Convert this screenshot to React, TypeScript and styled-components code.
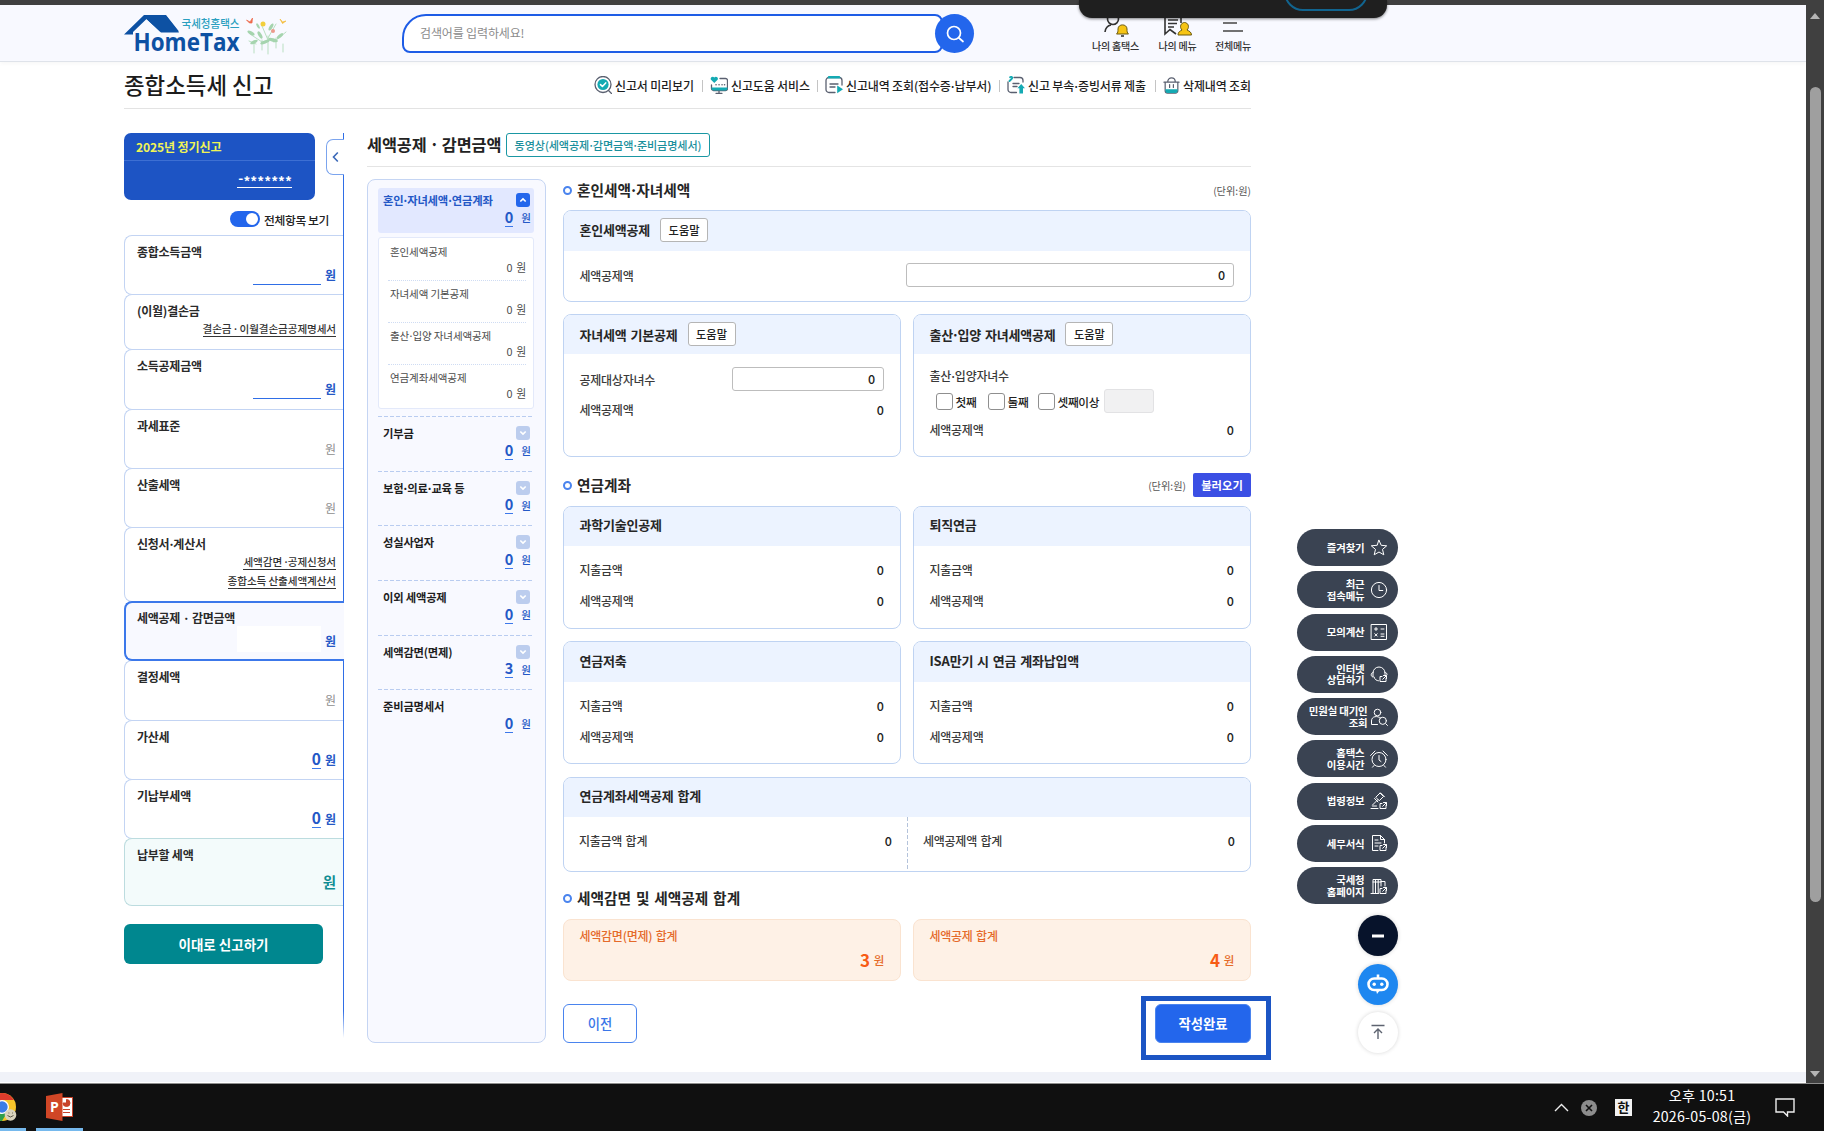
import React from 'react';
import styled, { createGlobalStyle, css } from 'styled-components';

const Global = createGlobalStyle`
  *, *::before, *::after { box-sizing: border-box; }
  body { margin: 0; background: #fff; overflow: hidden; }
  body, button, input { font-family: "Noto Sans CJK KR", "Noto Sans", sans-serif; }
  button { padding: 0; margin: 0; }
`;

/* ---------- shell ---------- */
const Screen = styled.div`
  width: 1824px; height: 1131px; display: flex; flex-direction: column;
  color: #222; position: relative; overflow: hidden; white-space: nowrap;
`;
const Browser = styled.div`display: flex; height: 1084px; border-bottom: 1px solid #8f8f8f;`;
const Page = styled.div`width: 1806px; display: flex; flex-direction: column; border-top: 5px solid #404040;`;
const PageEnd = styled.div`height: 10px; background: #f0f2f8; margin-top: auto; margin-bottom: 1px;`;
const Scroll = styled.div`
  width: 18px; background: #404040; display: flex; flex-direction: column; align-items: center;
  padding: 13px 0 6px; justify-content: space-between;
`;
const Thumb = styled.div`width: 11px; height: 815px; border-radius: 6px; background: #9f9f9f; margin: 68px 0 auto;`;
const Arrow = styled.i<{ $down?: boolean }>`
  border: 5px solid transparent; border-top-width: 0; border-bottom: 6px solid #b5b5b5;
  ${p => p.$down && 'transform: rotate(180deg);'}
`;
const Toast = styled.div`
  position: absolute; left: 1079px; top: 0; width: 308px; height: 18px; background: #1f1f1f;
  border-radius: 0 0 13px 13px; box-shadow: 0 1px 3px rgba(0,0,0,.5); overflow: hidden;
  &::after { content: ''; position: absolute; left: 205px; bottom: 7px; width: 84px; height: 38px;
    border: 2px solid #11648f; border-radius: 20px; }
`;

/* Interpunct with tightened side bearings */
const Dot = styled.span`margin: 0 -0.12em;`;
const tight = (s: string) => s.split('·').map((part, i) => (
  <React.Fragment key={i}>{i > 0 && <Dot>·</Dot>}{part}</React.Fragment>
));

/* ---------- header ---------- */
const Header = styled.header`
  height: 57px; background: #f8f9ff; border-bottom: 1px solid #dfe3ea; padding-left: 124px;
  display: flex; box-shadow: 0 2px 4px rgba(0,0,0,.03);
`;
const Logo = styled.div`width: 278px; padding-top: 9px; svg { display: block; }`;
const SearchBox = styled.div`
  width: 541px; height: 39px; margin-top: 9px; border: 2px solid #1d5ce6; background: #fff;
  border-radius: 24px 8px 8px 8px; padding-left: 16px; font-size: 12px; line-height: 34px; color: #8b8b8b; letter-spacing: -0.15px;
`;
const SearchButton = styled.button`
  width: 39px; height: 39px; border-radius: 50%; border: 0; background: #2366ec; margin: 9px 0 0 -8px;
  display: grid; place-items: center;
`;
const UserMenu = styled.nav`display: flex; margin: 5px 0 0 116px; gap: 16px;`;
const UserItem = styled.div<{ $w: number }>`
  width: ${p => p.$w}px; display: flex; flex-direction: column; align-items: center;
  font-size: 10px; line-height: 14px; letter-spacing: -0.2px; color: #333; font-weight: 500;
  svg { display: block; margin-bottom: 2px; flex: none; }
`;

/* ---------- title row ---------- */
const Container = styled.div`width: 1127px; margin-left: 124px;`;
const TitleRow = styled.div`
  height: 47px; border-bottom: 1px solid #e3e3e3; display: flex; align-items: center;
  justify-content: space-between;
`;
const PageTitle = styled.h1`margin: 0; padding-bottom: 2px; font-size: 22.4px; font-weight: 500; color: #1c1c1c; line-height: 44px;`;
const Links = styled.div`display: flex; align-items: center; height: 47px;`;
const LinkItem = styled.a<{ $w: number }>`
  width: ${p => p.$w}px; display: flex; align-items: center; font-size: 12px; font-weight: 500;
  color: #1e1e1e; letter-spacing: -0.15px;
  svg { flex: none; margin-right: 3px; }
`;
const Sep = styled.i`width: 1px; height: 12px; background: #c4c4c4; margin: 2px 7px 0 8px;`;

const Columns = styled.div`display: flex; align-items: flex-start; padding-top: 24px;`;

/* ---------- left side ---------- */
const Side = styled.aside`
  width: 220px; height: 905px; position: relative;
  &::after { content: ''; position: absolute; right: 0; top: 0; width: 1px; height: 100%;
    background: linear-gradient(#2f6ee6 97%, rgba(47,110,230,0)); }
`;
const CollapseTab = styled.div`
  position: absolute; z-index: 2; left: 202px; top: 6px; width: 18px; height: 36px; background: #fff;
  border: 1px solid #7ba4ee; border-right: 0; border-radius: 7px 0 0 7px; display: grid; place-items: center;
`;
const YearBox = styled.div`
  width: 191px; height: 67px; border-radius: 7px; background: #1d54c4; color: #f0f455; font-weight: 700;
  font-size: 12.1px; line-height: 27px;
`;
const YearTop = styled.div`height: 28px; padding-left: 12px; border-bottom: 1px solid #3d6fd3; letter-spacing: -0.15px;`;
const Masked = styled.span`
  display: flex; justify-content: flex-end; width: 55px; height: 19px; margin: 8px 0 0 113px; border-bottom: 1.5px solid #fff; color: #fff;
  font-size: 13.5px; line-height: 24px; letter-spacing: 0.1px;
  i { font-style: normal; line-height: 17px; }
`;
const ToggleRow = styled.div`
  height: 34px; margin-top: 1px; padding: 2px 15px 0 0; display: flex; justify-content: flex-end; align-items: center; gap: 4px;
  font-size: 11.8px; font-weight: 500; letter-spacing: -0.4px;
`;
const Toggle = styled.i`
  width: 30px; height: 16px; border-radius: 8px; background: #2366ec; padding: 2px; display: flex; justify-content: flex-end;
  &::after { content: ''; width: 12px; height: 12px; border-radius: 50%; background: #fff; }
`;
const tones = {
  blue: '#2458c6', gray: '#8e8e8e', teal: '#108d93',
};
const StepCard = styled.div<{ $h: number; $kind?: 'active' | 'total' }>`
  height: ${p => p.$h + 1}px; margin-bottom: -1px; padding: 7px 8px 0 12px; position: relative;
  border: 1px solid #c3d4f3; border-right: 0; border-radius: 8px 0 0 8px; background: #fff;
  ${p => p.$kind === 'active' && css`background: #f8f9ff; border: 2px solid #3c78ea; border-right: 0; z-index: 1; padding: 6px 8px 0 11px;`}
  ${p => p.$kind === 'total' && css`background: #f3fbfb; border-color: #bcdcdf;`}
`;
const StepName = styled.div`font-size: 12px; line-height: 18px; font-weight: 700; letter-spacing: -0.25px; color: #2a2a2a;`;
const StepValue = styled.div<{ $tone: keyof typeof tones; $big?: boolean }>`
  display: flex; justify-content: flex-end; align-items: center; gap: 4px; height: 26px; margin-top: 0;
  font-size: ${p => (p.$big ? 14.5 : 12)}px; font-weight: ${p => (p.$tone === 'gray' ? 400 : 700)};
  color: ${p => tones[p.$tone]};
  ${p => p.$big && 'margin-top: 4px;'}
`;
const Blank = styled.span`width: 68px; height: 1px; background: #2f6ee6; margin-top: 20px;`;
const WhiteBlank = styled.span`width: 84px; height: 26px; background: #fff; margin-top: -3px;`;
const Figure = styled.b`font-size: 15.5px; line-height: 18px; height: 20px; font-weight: 700; border-bottom: 1px solid #3c78ea;`;
const DocLink = styled.div`
  width: max-content; margin: 0 0 3px auto; font-size: 10.6px; line-height: 15px; letter-spacing: -0.1px; color: #333; font-weight: 500;
  border-bottom: 1px solid #333; position: relative; top: 1px;
`;
const FileButton = styled.button`
  width: 199px; height: 40px; margin-top: 19px; background: #00878f; color: #fff; border: 0; border-radius: 6px;
  font-size: 13.5px; font-weight: 700;
`;

/* ---------- work area ---------- */
const Work = styled.main`width: 884px; margin-left: 23px;`;
const WorkHead = styled.div`
  height: 34px; border-bottom: 1px solid #e4e4e4; display: flex; align-items: flex-start; gap: 6px;
`;
const WorkTitle = styled.h2`margin: 0; width: 133px; font-size: 16.3px; line-height: 23px; font-weight: 700; color: #222; letter-spacing: -0.05px; word-spacing: 1px;`;
const VideoButton = styled.button`
  width: 204px; height: 24px; background: #fff; border: 1.5px solid #1a97a3; border-radius: 3px;
  color: #1a8f9c; font-size: 11.1px; letter-spacing: -0.1px; line-height: 20px; font-weight: 500;
`;
const WorkBody = styled.div`display: flex; gap: 17px; padding-top: 12px;`;

const Tree = styled.div`
  width: 179px; height: 864px; background: #f8f9ff; border: 1px solid #c5d5f3; border-radius: 8px; padding: 8px 11px 0 10px;
`;
const TreeNode = styled.div<{ $open?: boolean }>`
  height: ${p => (p.$open ? 45 : 54.7)}px; padding: ${p => (p.$open ? 3 : 8)}px 3px 0 5px; color: #1e1e1e;
  ${p => (p.$open ? 'background: #e2e8ff; border-radius: 3px; color: #2458c6;' : 'background: repeating-linear-gradient(90deg, #b9ccf0 0 4px, transparent 4px 6px) 0 0 / 100% 1px no-repeat;')}
`;
const NodeTop = styled.div`
  display: flex; justify-content: space-between; align-items: center; height: 18px; padding-right: 1px;
  font-size: 11.3px; font-weight: 700; letter-spacing: -0.2px;
`;
const Chevron = styled.span<{ $on?: boolean }>`
  width: 14px; height: 14px; border-radius: 3px; background: ${p => (p.$on ? '#2366ec' : '#bccdee')}; display: grid; place-items: center;
`;
const NodeValue = styled.div`
  display: flex; justify-content: flex-end; gap: 8px; align-items: center; color: #2458c6; font-size: 10.5px; height: 19px; margin-top: -1px; font-weight: 500;
`;
const NodeNum = styled.b`font-size: 14.5px; line-height: 16px; height: 18px; border-bottom: 1px solid #3c78ea; font-weight: 700;`;
const SubList = styled.div`
  height: 172px; margin: 4px 0 7px; background: #fff; border: 1px solid #e3e9fa; border-radius: 3px; padding: 0 7px 0 9px;
`;
const SubItem = styled.div`
  height: 42px; padding: 6px 0 0 2px; font-size: 10.5px; line-height: 16px; color: #4c4c4c; letter-spacing: -0.1px;
  & + & { border-top: 1px dotted #cfdcf3; padding-top: 5px; }
`;
const SubValue = styled.div`text-align: right; line-height: 14px; font-size: 10.8px; word-spacing: 1.5px;`;

const Form = styled.div`width: 688px;`;
const SectionHead = styled.div<{ $h: number; $pt: number }>`
  height: ${p => p.$h}px; padding-top: ${p => p.$pt}px; display: flex; align-items: flex-start;
`;
const SectionTitle = styled.h3`
  margin: 0 auto 0 0; font-size: 14.7px; line-height: 22px; font-weight: 700; color: #262626; display: flex; align-items: center; word-spacing: 1.5px;
  &::before { content: ''; width: 9px; height: 9px; border-radius: 50%; border: 2.5px solid #4a84ee; margin: 1px 5px 0 0; }
`;
const Unit = styled.span`font-size: 10.2px; line-height: 23px; color: #555;`;
const LoadButton = styled.button`
  width: 58px; height: 24px; border: 0; border-radius: 2px; background: #3b4fe4; color: #fff; font-size: 11.3px; font-weight: 700; margin: -1px 0 0 7px;
`;
const CardRow = styled.div<{ $mb: number }>`display: flex; gap: 12px; margin-bottom: ${p => p.$mb}px;`;
const Card = styled.section<{ $h: number }>`
  flex: 1; height: ${p => p.$h}px; border: 1px solid #bfd3f2; border-radius: 8px; overflow: hidden; background: #fff;
`;
const CardHead = styled.div<{ $h: number; $pb?: number }>`
  height: ${p => p.$h}px; background: #ecf3ff; padding: 0 15.5px ${p => p.$pb ?? 4}px; display: flex; align-items: center; gap: 10px;
  font-size: 13px; font-weight: 700; letter-spacing: -0.2px; word-spacing: 1.2px; color: #262626;
`;
const HelpButton = styled.button<{ $mt?: number }>`
  width: 48px; height: 24px; background: #fff; border: 1px solid #b5b5b5; border-radius: 3px; font-size: 11.2px; color: #222;
  margin-top: ${p => p.$mt ?? -2}px; font-weight: 500;
`;
const Rows = styled.div<{ $pt: number }>`padding: ${p => p.$pt}px 16px 0 15.5px; display: flex; flex-direction: column;`;
const Row = styled.div<{ $h: number }>`
  height: ${p => p.$h}px; display: flex; align-items: center; justify-content: space-between; font-size: 12px; color: #3a3a3a; letter-spacing: -0.25px; font-weight: 500;
`;
const Num = styled.span`font-size: 12.5px; color: #222; letter-spacing: 0;`;
const NumField = styled.div<{ $w: number }>`
  width: ${p => p.$w}px; height: 24px; border: 1px solid #bdbdbd; border-radius: 3px; text-align: right; padding-right: 8px;
  font-size: 12.5px; line-height: 21px; color: #222;
`;
const Checks = styled.div`display: flex; align-items: center; height: 24px; margin-top: 3px; padding-left: 6px; font-size: 11.7px; letter-spacing: -0.35px; color: #222; font-weight: 500;`;
const Check = styled.label<{ $w: number }>`
  width: ${p => p.$w}px; display: flex; align-items: center; gap: 3px;
  &::before { content: ''; width: 17px; height: 17px; border: 1.5px solid #8f8f8f; border-radius: 3px; background: #fff; margin-top: 1px; flex: none; }
`;
const Disabled = styled.span`width: 50px; height: 24px; border: 1px solid #e2e2e4; border-radius: 3px; background: #f1f1f2;`;
const SumSplit = styled.div`display: flex; height: 54px;`;
const SumHalf = styled.div<{ $w: number }>`
  width: ${p => p.$w}px; padding: 0 15px; display: flex; justify-content: space-between; align-items: center; height: 46px;
  font-size: 12px; color: #3a3a3a; letter-spacing: -0.25px; word-spacing: 1px; font-weight: 500;
`;
const Dash = styled.i`width: 1px; height: 54px; background: repeating-linear-gradient(#b4c3db 0 4px, transparent 4px 6px);`;
const Total = styled.section`
  flex: 1; height: 62px; background: #fef1e6; border: 1px solid #fae3d0; border-radius: 8px; padding: 7px 16px 0 15.5px; color: #e56a2a;
  font-size: 12px; line-height: 18px; letter-spacing: -0.25px; word-spacing: 1px; font-weight: 500;
`;
const TotalValue = styled.div`
  display: flex; justify-content: flex-end; align-items: center; gap: 4px; height: 30px; font-size: 11.5px;
  b { font-size: 17px; color: #f75c14; }
`;
const Actions = styled.div`display: flex; justify-content: space-between; padding-top: 23px;`;
const Prev = styled.button`
  width: 74px; height: 39px; background: #fff; border: 1.5px solid #4a84ee; border-radius: 6px; color: #3a76e8; font-size: 13.3px; font-weight: 500;
`;
const Done = styled.button`
  position: relative; width: 96px; height: 39px; background: #2366ec; border: 1px solid #4a84ee; border-radius: 6px; color: #fff; font-size: 13.3px; font-weight: 700;
  &::after { content: ''; position: absolute; left: -15px; top: -9px; width: 130px; height: 64px; border: 5px solid #1c55c4; }
`;

/* ---------- floating menu ---------- */
const Quick = styled.nav`
  position: absolute; left: 1296.5px; top: 529px; width: 101px; display: flex; flex-direction: column; align-items: flex-end; gap: 5.27px;
`;
const QuickItem = styled.a<{ $wide?: boolean }>`
  width: 101px; height: 37px; border-radius: 19px; background: #3a4352; color: #fff; display: flex; align-items: center; justify-content: flex-end;
  gap: ${p => (p.$wide ? 2 : 5)}px; padding-right: 10px; font-size: 10.4px; line-height: 11.5px; font-weight: 700; text-align: right; letter-spacing: -0.15px;
  svg { flex: none; }
`;
const Round = styled.a<{ $bg: string; $mt: number }>`
  width: 40px; height: 41px; border-radius: 50%; background: ${p => p.$bg}; display: grid; place-items: center;
  margin-top: ${p => p.$mt}px; box-shadow: 0 0 4px rgba(0,0,0,.16);
`;

/* ---------- taskbar ---------- */
const Taskbar = styled.footer`
  height: 47px; background: #101010; color: #fff; display: flex;
`;
const AppSlot = styled.div<{ $w: number; $ml: number }>`
  width: ${p => p.$w}px; margin-left: ${p => p.$ml}px; height: 47px; border-bottom: 3px solid #76b9ed; padding-top: 9px;
  display: flex; justify-content: center; overflow: hidden;
  svg { flex: none; }
`;
const ChromeIcon = styled.svg`margin-left: -22px;`;
const Tray = styled.div`margin-left: auto; display: flex; align-items: center; padding-right: 29px;`;
const TrayIcon = styled.span<{ $mr: number }>`display: flex; margin-right: ${p => p.$mr}px;`;
const Ime = styled.b`width: 17px; height: 17px; background: #f2f2f2; color: #111; font-size: 13px; line-height: 16px; text-align: center; margin-right: 10px;`;
const Clock = styled.div`width: 120px; text-align: center; font-size: 14.2px; line-height: 21px; letter-spacing: 0.25px; margin-right: 13px; padding-bottom: 3px;`;

/* ---------- icons ---------- */
const S = ({ w = 18, children, sw = 1.3, c = '#fff' }: { w?: number; children: React.ReactNode; sw?: number; c?: string }) => (
  <svg width={w} height={w} viewBox="0 0 18 18" fill="none" stroke={c} strokeWidth={sw} strokeLinecap="round" strokeLinejoin="round">{children}</svg>
);
const ext = <path d="M12 11.5h-2v5h6v-3M13.5 10.5h3v3M16.3 10.7l-3.6 3.6" />;
const T = '#14aab3';
const G = '#5a6070';

const topLinks: [React.ReactNode, string, number][] = [
  [<S c={G}><circle cx="9" cy="8.5" r="8" /><path d="M14.5 14.5l3 3" /><circle cx="9" cy="8.5" r="5.6" fill={T} stroke="none" /><path d="M6.5 8.6l1.9 1.8 3.3-3.5" stroke="#fff" strokeWidth="1.5" /></S>, '신고서 미리보기', 100],
  [<S c={G}><path d="M10 2.5h5.5a2 2 0 0 1 2 2v8a2 2 0 0 1-2 2h-12a2 2 0 0 1-2-2V9M6 17.3h6M9 14.500v2.800" /><path d="M1.500 11.500h16v1a2 2 0 0 1-2 2h-12a2 2 0 0 1-2-2z" fill={T} stroke="none" /><path d="M4.300 7L1 3.700C-.3 2 2.600-.6 4.300 1.600 6-.6 8.900 2 7.600 3.700z" fill={T} stroke="none" /><path d="M6 8.800h.1M9 8.800h.1M12 8.800h.1M14.500 8.800h.1" strokeWidth="1.500" /></S>, '신고도움 서비스', 99],
  [<S c={G}><path d="M10 16.500H4a3 3 0 0 1-3-3V4.500a3 3 0 0 1 3-3h10a3 3 0 0 1 3 3V9M5 8h8M5 11h5" /><path d="M4 1.300h10" stroke={T} strokeWidth="2.400" /><path d="M12.200 9.500l5.800 3.800-5.800 4z" fill={T} stroke="none" /></S>, '신고내역 조회(접수증·납부서)', 166],
  [<S c={G}><path d="M9.500 16.500H4a3 3 0 0 1-3-3V6M7 1.500h6a3 3 0 0 1 3 3V6M6 7.500h6M6 10.500h4" /><path d="M3 1.200c2-1 3 .5 1.500 1.800L2.500 5" stroke={T} strokeWidth="1.800" /><path d="M14.200 8l3.800 4.300h-2v5.200h-3.600v-5.200h-2z" fill={T} stroke="none" /></S>, '신고 부속·증빙서류 제출', 140],
  [<S c={G} w={17}><path d="M1 5.500h16M2.300 5.500v9a2.500 2.500 0 0 0 2.500 2.500h8.400a2.500 2.500 0 0 0 2.500-2.500v-9M5 5.300C5 -.5 13-.5 13 5.300M7 8v3M11 8v3" /><path d="M2.500 13h13v1.500a2.500 2.500 0 0 1-2.500 2.500H5a2.500 2.500 0 0 1-2.500-2.500z" fill={T} stroke="none" /></S>, '삭제내역 조회', 88],
];

const quick: [string[], React.ReactNode][] = [
  [['즐겨찾기'], <path d="M9 1.300l2.200 5 5.500.5-4.200 3.600 1.300 5.400L9 13l-4.800 2.800 1.300-5.400L1.300 6.800l5.500-.5z" />],
  [['최근', '접속메뉴'], <><circle cx="9" cy="9" r="7.600" /><path d="M9 4.500V9.500h3.800" /></>],
  [['모의계산'], <><rect x="1.500" y="1.500" width="15" height="15" /><path d="M4.500 6h3M6 4.500v3M11 6h3M4.800 10.700l2.400 2.400M7.200 10.700l-2.400 2.400M11 11h3M11 13.300h3" /></>],
  [['인터넷', '상담하기'], <><path d="M3 11.500V8a6 6 0 0 1 12 0v1.500M3 7.500c-2.500 0-2.500 4.500 0 4.500M15 7.500c1.500 0 2 1 2 2M4 12c1 3 2.500 3.500 4.500 3.800" />{ext}</>],
  [['민원실 대기인', '조회'], <><circle cx="7.500" cy="4.500" r="3.300" /><path d="M7.500 16.500h-6v-3.500c0-5 6-5.500 9-3M16 16l1.500 1.500" /><circle cx="12.800" cy="12.800" r="3.600" /></>],
  [['홈택스', '이용시간'], <><circle cx="9" cy="9.500" r="7" /><path d="M9 5.500v4.500l2 1.500M.6 5.500L5 1M17.400 5.500L13 1M4 15.500l-1.500 1.700M14 15.500l1.500 1.700" /></>],
  [['법령정보'], <><path d="M6 5l4-4 3.500 3.500-4 4zM4.500 6.500l3.500 3.500M10.500.8l4 4M8 7.500l-5.500 5.500M1 16.500h7M2.500 14h4" />{ext}</>],
  [['세무서식'], <><path d="M8 16.500H2.500v-15h8l4 4V9M10.500 1.500v4h4M5 6h3M5 9h6M5 12h3" />{ext}</>],
  [['국세청', '홈페이지'], <><path d="M1 16.500h7.500M3 16V2.500h8V9M11 4.500h4V9M5.500 2.500V16M8.200 2.500V16M3 5h8" />{ext}</>],
];

const Won = ({ n }: { n: string }) => <NodeValue><NodeNum>{n}</NodeNum>원</NodeValue>;
const Chev = ({ up }: { up?: boolean }) => (
  <Chevron $on={up}>
    <svg width="8" height="6" viewBox="0 0 8 6" fill="none" stroke="#fff" strokeWidth="1.7"><path d={up ? 'M1.300 4.500L4 2l2.700 2.500' : 'M1.300 1.500L4 4l2.700-2.500'} /></svg>
  </Chevron>
);
const MoneyCard = ({ title, h, head }: { title: string; h: number; head: number }) => (
  <Card $h={h}>
    <CardHead $h={head}>{title}</CardHead>
    <Rows $pt={8}>
      <Row $h={31}>지출금액<Num>0</Num></Row>
      <Row $h={31}>세액공제액<Num>0</Num></Row>
    </Rows>
  </Card>
);

export default function App() {
  return (
    <Screen>
      <Global />
      <Browser>
        <Page>
          <Header>
            <Logo>
              <svg width="168" height="44" viewBox="0 0 168 44">
                <path d="M0 20.500L20 1h22l13 16.500H36L22.500 5 9 18v2.500z" fill="#0d51a3" />
                <path d="M22 4.500L37 18.500h18L41.500 1H21z" fill="#0d51a3" />
                <text x="9.500" y="36.500" fontFamily="'Open Sans', 'Noto Sans', sans-serif" fontSize="24.500" fontWeight="700" fill="#0d51a3" textLength="106" lengthAdjust="spacingAndGlyphs">HomeTax</text>
                <text x="57.500" y="14" fontFamily="'Noto Sans CJK KR', sans-serif" fontSize="11" fontWeight="500" fill="#2a9fc0" textLength="58" lengthAdjust="spacingAndGlyphs">국세청홈택스</text>
                <g fill="none" stroke="#b9dfc1" strokeWidth="1" strokeLinecap="round">
                  <path d="M144 40V22M138 36V26M130 39V28M152 34V24M159 38V30M144 26l-6-14M144 24l8-14M138 28l-12-8M150 28l12-10M132 30l-7-3" />
                </g>
                <g fill="#a5d4ae">
                  <ellipse cx="127" cy="19" rx="4" ry="1.600" transform="rotate(30 127 19)" /><ellipse cx="130" cy="28" rx="4" ry="1.600" transform="rotate(-25 130 28)" />
                  <ellipse cx="136" cy="21" rx="4" ry="1.700" transform="rotate(60 136 21)" /><ellipse cx="147" cy="13" rx="4" ry="1.600" transform="rotate(-60 147 13)" />
                  <ellipse cx="149" cy="26" rx="5" ry="1.800" transform="rotate(15 149 26)" /><ellipse cx="156" cy="22" rx="4" ry="1.600" transform="rotate(-40 156 22)" />
                  <ellipse cx="141" cy="28" rx="5" ry="1.600" transform="rotate(-20 141 28)" /><ellipse cx="134" cy="12" rx="3" ry="1.200" transform="rotate(60 134 12)" />
                </g>
                <circle cx="139" cy="10" r="2.500" fill="#f2cf3c" /><circle cx="149" cy="17" r="2" fill="#ec9a8c" />
                <path d="M122.500 6l3.500 2 2.500-4-.5 5-2.500 0z" fill="#ee6a4c" stroke="#ee6a4c" strokeWidth=".7" /><path d="M156 5l2.500 3 3.500-1-3.500 2.500z" fill="#f4bd3c" stroke="#f4bd3c" strokeWidth=".7" />
              </svg>
            </Logo>
            <SearchBox>검색어를 입력하세요!</SearchBox>
            <SearchButton aria-label="검색">
              <svg width="20" height="20" viewBox="0 0 20 20" fill="none" stroke="#fff" strokeWidth="1.700" strokeLinecap="round"><circle cx="9" cy="9" r="6.500" /><path d="M14 14l4 3.500" /></svg>
            </SearchButton>
            <UserMenu>
              <UserItem $w={51}>
                <svg width="28" height="27" viewBox="0 0 28 27" fill="none" stroke="#333" strokeWidth="1.600"><circle cx="11" cy="9" r="5.500" /><path d="M3 22c.5-4 3-6.500 6-7" /><path d="M14.500 24c1.500-1 1.500-3 1.500-5 0-5.500 9-5.500 9 0 0 2 0 4 1.500 5z" fill="#f6c414" stroke="#6b5a10" strokeWidth="1" /><path d="M19 26h3" /></svg>
                나의 홈택스
              </UserItem>
              <UserItem $w={41}>
                <svg width="28" height="27" viewBox="0 0 28 27" fill="none" stroke="#333" strokeWidth="1.600"><path d="M1 5v19l5-4.500 6 4.500M17 5v8M4 10h10M4 13.500h9M4 17h6" /><path d="M14 25c0-3 2-4 4-5-3-3-1-7.500 2.500-7.500S26 17 23 20c2 1 4.500 2 4.500 5z" fill="#f6c414" stroke="#6b5a10" strokeWidth="1" /></svg>
                나의 메뉴
              </UserItem>
              <UserItem $w={38}>
                <svg width="22" height="27" viewBox="0 0 22 27" stroke="#444" strokeWidth="1.500"><path d="M1 13h14M1 21h20" /></svg>
                전체메뉴
              </UserItem>
            </UserMenu>
          </Header>

          <Container>
            <TitleRow>
              <PageTitle>종합소득세 신고</PageTitle>
              <Links>
                {topLinks.map(([icon, label, w], i) => (
                  <React.Fragment key={label}>
                    {i > 0 && <Sep />}
                    <LinkItem $w={w}>{icon}<span>{tight(label)}</span></LinkItem>
                  </React.Fragment>
                ))}
              </Links>
            </TitleRow>

            <Columns>
              <Side>
                <CollapseTab>
                  <svg width="7" height="12" viewBox="0 0 7 12" fill="none" stroke="#3a68b8" strokeWidth="1.600"><path d="M5.800 1.500L1.500 6l4.300 4.500" /></svg>
                </CollapseTab>
                <YearBox>
                  <YearTop>2025년 정기신고</YearTop>
                  <Masked><i>-</i>*******</Masked>
                </YearBox>
                <ToggleRow><Toggle />전체항목 보기</ToggleRow>
                <StepCard $h={59}><StepName>종합소득금액</StepName><StepValue $tone="blue"><Blank />원</StepValue></StepCard>
                <StepCard $h={55}><StepName>(이월)결손금</StepName><DocLink>{tight('결손금 · 이월결손금공제명세서')}</DocLink></StepCard>
                <StepCard $h={60}><StepName>소득공제금액</StepName><StepValue $tone="blue"><Blank />원</StepValue></StepCard>
                <StepCard $h={59}><StepName>과세표준</StepName><StepValue $tone="gray">원</StepValue></StepCard>
                <StepCard $h={59}><StepName>산출세액</StepName><StepValue $tone="gray">원</StepValue></StepCard>
                <StepCard $h={74}><StepName>{tight('신청서·계산서')}</StepName><DocLink>{tight('세액감면 ·공제신청서')}</DocLink><DocLink>종합소득 산출세액계산서</DocLink></StepCard>
                <StepCard $h={59} $kind="active"><StepName>세액공제 · 감면금액</StepName><StepValue $tone="blue"><WhiteBlank />원</StepValue></StepCard>
                <StepCard $h={60}><StepName>결정세액</StepName><StepValue $tone="gray">원</StepValue></StepCard>
                <StepCard $h={59}><StepName>가산세</StepName><StepValue $tone="blue"><Figure>0</Figure>원</StepValue></StepCard>
                <StepCard $h={59}><StepName>기납부세액</StepName><StepValue $tone="blue"><Figure>0</Figure>원</StepValue></StepCard>
                <StepCard $h={67} $kind="total"><StepName>납부할 세액</StepName><StepValue $tone="teal" $big>원</StepValue></StepCard>
                <FileButton>이대로 신고하기</FileButton>
              </Side>

              <Work>
                <WorkHead>
                  <WorkTitle>{tight('세액공제 · 감면금액')}</WorkTitle>
                  <VideoButton>{tight('동영상(세액공제·감면금액·준비금명세서)')}</VideoButton>
                </WorkHead>
                <WorkBody>
                  <Tree>
                    <TreeNode $open><NodeTop><span>{tight('혼인·자녀세액·연금계좌')}</span><Chev up /></NodeTop><Won n="0" /></TreeNode>
                    <SubList>
                      {['혼인세액공제', '자녀세액 기본공제', '출산·입양 자녀세액공제', '연금계좌세액공제'].map(t => (
                        <SubItem key={t}>{tight(t)}<SubValue>0 원</SubValue></SubItem>
                      ))}
                    </SubList>
                    {[['기부금', '0'], ['보험·의료·교육 등', '0'], ['성실사업자', '0'], ['이외 세액공제', '0'], ['세액감면(면제)', '3'], ['준비금명세서', '0']].map(([t, n], i) => (
                      <TreeNode key={t}><NodeTop><span>{tight(t)}</span>{i < 5 && <Chev />}</NodeTop><Won n={n} /></TreeNode>
                    ))}
                  </Tree>

                  <Form>
                    <SectionHead $h={31} $pt={0}><SectionTitle><span>{tight('혼인세액·자녀세액')}</span></SectionTitle><Unit>(단위:원)</Unit></SectionHead>
                    <CardRow $mb={12}>
                      <Card $h={92}>
                        <CardHead $h={40}>혼인세액공제<HelpButton $mt={2}>도움말</HelpButton></CardHead>
                        <Rows $pt={11}><Row $h={26}>세액공제액<NumField $w={328}>0</NumField></Row></Rows>
                      </Card>
                    </CardRow>
                    <CardRow $mb={15}>
                      <Card $h={143}>
                        <CardHead $h={39} $pb={0}>자녀세액 기본공제<HelpButton>도움말</HelpButton></CardHead>
                        <Rows $pt={10}>
                          <Row $h={30}>공제대상자녀수<NumField $w={152}>0</NumField></Row>
                          <Row $h={31}>세액공제액<Num>0</Num></Row>
                        </Rows>
                      </Card>
                      <Card $h={143}>
                        <CardHead $h={39} $pb={0}><span>{tight('출산·입양 자녀세액공제')}</span><HelpButton>도움말</HelpButton></CardHead>
                        <Rows $pt={10}>
                          <Row $h={22}><span>{tight('출산·입양자녀수')}</span></Row>
                          <Checks>
                            <Check $w={52}>첫째</Check><Check $w={50}>둘째</Check><Check $w={66}>셋째이상</Check><Disabled />
                          </Checks>
                          <Row $h={32}>세액공제액<Num>0</Num></Row>
                        </Rows>
                      </Card>
                    </CardRow>
                    <SectionHead $h={34} $pt={2}><SectionTitle>연금계좌</SectionTitle><Unit>(단위:원)</Unit><LoadButton>불러오기</LoadButton></SectionHead>
                    <CardRow $mb={12}>
                      <MoneyCard title="과학기술인공제" h={123} head={39} />
                      <MoneyCard title="퇴직연금" h={123} head={39} />
                    </CardRow>
                    <CardRow $mb={13}>
                      <MoneyCard title="연금저축" h={123} head={40} />
                      <MoneyCard title="ISA만기 시 연금 계좌납입액" h={123} head={40} />
                    </CardRow>
                    <CardRow $mb={15}>
                      <Card $h={95}>
                        <CardHead $h={39}>연금계좌세액공제 합계</CardHead>
                        <SumSplit>
                          <SumHalf $w={343}>지출금액 합계<Num>0</Num></SumHalf><Dash />
                          <SumHalf $w={342}>세액공제액 합계<Num>0</Num></SumHalf>
                        </SumSplit>
                      </Card>
                    </CardRow>
                    <SectionHead $h={32} $pt={0}><SectionTitle>세액감면 및 세액공제 합계</SectionTitle></SectionHead>
                    <CardRow $mb={0}>
                      <Total>세액감면(면제) 합계<TotalValue><b>3</b>원</TotalValue></Total>
                      <Total>세액공제 합계<TotalValue><b>4</b>원</TotalValue></Total>
                    </CardRow>
                    <Actions><Prev>이전</Prev><Done>작성완료</Done></Actions>
                  </Form>
                </WorkBody>
              </Work>
            </Columns>
          </Container>
          <PageEnd />
        </Page>
        <Scroll><Arrow /><Thumb /><Arrow $down /></Scroll>
      </Browser>

      <Quick>
        {quick.map(([lines, icon], i) => (
          <QuickItem key={i} $wide={i === 4}>
            <span>{lines.map(l => <div key={l}>{l}</div>)}</span>
            <S sw={1}>{icon}</S>
          </QuickItem>
        ))}
        <Round $bg="#07132b" $mt={6}><svg width="12" height="4"><rect width="12" height="3" y=".5" fill="#fff" /></svg></Round>
        <Round $bg="#1e87f0" $mt={2}>
          <svg width="24" height="22" viewBox="0 0 24 22" fill="none" stroke="#fff" strokeWidth="2.600"><rect x="2.500" y="5.500" width="19" height="11.500" rx="5.700" /><path d="M12 5.500V1.500" /><circle cx="8.200" cy="11.200" r="1.700" fill="#fff" stroke="none" /><circle cx="15.800" cy="11.200" r="1.700" fill="#fff" stroke="none" /><path d="M10 17h4l-3 4z" fill="#fff" stroke="none" /></svg>
        </Round>
        <Round $bg="#fff" $mt={2}>
          <svg width="14" height="16" viewBox="0 0 14 16" fill="none" stroke="#5d6370" strokeWidth="1.400"><path d="M.5 1.500h13M7 15V5.500M3 9l4-4 4 4" /></svg>
        </Round>
      </Quick>
      <Toast />

      <Taskbar>
        <AppSlot $w={26} $ml={0}>
          <ChromeIcon width="48" height="30" viewBox="-24 -14 48 30">
            <circle r="14" fill="#f7c52b" /><path d="M-14 0A14 14 0 0 1 12.100-7L0-7-6 3z" fill="#dd3b2c" /><path d="M-12.500-6A14 14 0 0 0 0 14L6 4-6 4z" fill="#2f9e4d" />
            <circle r="7" fill="#fff" /><circle r="5.700" fill="#3b7de8" /><circle cx="8.500" cy="8" r="5.800" fill="#d9d3bd" /><path d="M5.500 8.500q3 3 6 0M6.500 6h.8M10 6h.8" stroke="#5b5648" fill="none" />
          </ChromeIcon>
        </AppSlot>
        <AppSlot $w={47} $ml={10}>
          <svg width="27" height="28" viewBox="0 0 27 28">
            <rect x="14" y="4.500" width="12.500" height="19" fill="#fff" stroke="#c8432a" /><path d="M17 10a3.500 3.500 0 1 0 3.500-3.500V10zM17 16.500h7M17 19.500h7" fill="#c8432a" stroke="#c8432a" />
            <path d="M0 3L16.500 0v28L0 25z" fill="#d04626" />
            <text x="4" y="19" fontFamily="'Open Sans', sans-serif" fontSize="14" fontWeight="700" fill="#fff">P</text>
          </svg>
        </AppSlot>
        <Tray>
          <TrayIcon $mr={12}><svg width="15" height="9" viewBox="0 0 15 9" fill="none" stroke="#eee" strokeWidth="1.400"><path d="M1 8l6.500-6.500L14 8" /></svg></TrayIcon>
          <TrayIcon $mr={18}><svg width="16" height="16" viewBox="0 0 16 16"><circle cx="8" cy="8" r="8" fill="#8d8d8d" /><path d="M5 5l6 6M11 5l-6 6" stroke="#111" strokeWidth="1.600" /></svg></TrayIcon>
          <Ime>한</Ime>
          <Clock>오후 10:51<br />2026-05-08(금)</Clock>
          <svg width="20" height="19" viewBox="0 0 20 19" fill="none" stroke="#eee" strokeWidth="1.400"><path d="M1 1h18v13h-6.500v4L8.500 14H1z" /></svg>
        </Tray>
      </Taskbar>
    </Screen>
  );
}
